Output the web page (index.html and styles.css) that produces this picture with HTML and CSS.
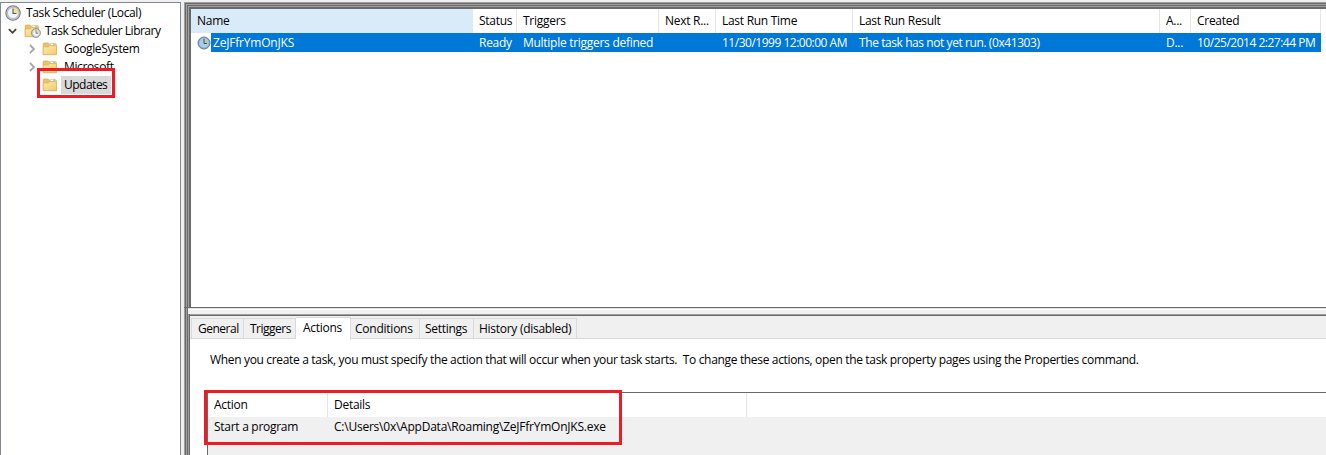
FILE: index.html
```
<!DOCTYPE html>
<html lang="en">
<head>
<meta charset="utf-8">
<title>Task Scheduler</title>
<link rel="stylesheet" href="styles.css">
</head>
<body>
<svg class="defs" width="0" height="0">
  <defs>
    <linearGradient id="gold" x1="0" y1="0" x2="1" y2="1"><stop offset="0" stop-color="#fdeaae"/><stop offset="1" stop-color="#efca6c"/></linearGradient>
    <symbol id="clock" viewBox="0 0 16 16">
      <circle cx="8" cy="8" r="7.2" fill="#c6c8ca" stroke="#7d8083" stroke-width="1.1"/>
      <circle cx="8" cy="8" r="5.5" fill="#eef4fa" stroke="#a2a6aa" stroke-width=".6"/>
      <path d="M8 8V2.7A5.3 5.3 0 0 1 13.3 8Z" fill="#f8dd9a"/>
      <path d="M8 3.5V8.5H11.5" fill="none" stroke="#4c5c70" stroke-width="1.1"/>
    </symbol>
    <symbol id="clock-selected" viewBox="0 0 14 14">
      <circle cx="7" cy="7" r="6" fill="#8eafc9" stroke="#5c7e9c"/>
      <circle cx="7" cy="7" r="4.6" fill="#a9cdea"/>
      <path d="M7 7V2.4A4.6 4.6 0 0 1 11.6 7Z" fill="#bdcba9"/>
      <path d="M7 3V7.5H10" fill="none" stroke="#2f536f"/>
    </symbol>
    <symbol id="folder" viewBox="0 0 16 14">
      <path d="M1.2 12.5V1.8Q1.2 1 2 1H6L7.2 2.2H14.2V12.5Z" fill="#e8c46c" stroke="#d4a94e" stroke-width=".7"/>
      <path d="M8.2 1.4H13.5V3.5H8.2Z" fill="#fff" stroke="#c8ae6b" stroke-width=".5"/>
      <path d="M11 1.7H13V2.6H11Z" fill="#5aa0d5"/>
      <path d="M1.2 4.9H6.4L7.6 3.6H14.5V12.7H1.2Z" fill="url(#gold)" stroke="#dcb254" stroke-width=".7"/>
    </symbol>
  </defs>
</svg>
<div class="app">
  <aside class="tree">
    <div class="node root"><svg class="clock"><use href="#clock"/></svg><span class="label">Task Scheduler (Local)</span></div>
    <div class="node library"><svg class="arrow open" viewBox="0 0 10 6"><path d="M1 1L5 5L9 1"/></svg><span class="libicon"><svg class="folder"><use href="#folder"/></svg><svg class="badge"><use href="#clock"/></svg></span><span class="label">Task Scheduler Library</span></div>
    <div class="node child"><svg class="arrow" viewBox="0 0 6 10"><path d="M1 1L5 5L1 9"/></svg><svg class="folder"><use href="#folder"/></svg><span class="label">GoogleSystem</span></div>
    <div class="node child"><svg class="arrow" viewBox="0 0 6 10"><path d="M1 1L5 5L1 9"/></svg><svg class="folder"><use href="#folder"/></svg><span class="label">Microsoft</span></div>
    <div class="node child selected"><span class="arrow"></span><svg class="folder"><use href="#folder"/></svg><span class="label">Updates</span></div>
    <div class="mark mark-tree"></div>
  </aside>
  <main class="content">
    <section class="tasks">
      <div class="row head"><span class="sorted">Name</span><span>Status</span><span>Triggers</span><span>Next R...</span><span>Last Run Time</span><span>Last Run Result</span><span>A...</span><span>Created</span></div>
      <div class="row task"><span class="name"><svg><use href="#clock-selected"/></svg><b>ZeJFfrYmOnJKS</b></span><span>Ready</span><span>Multiple triggers defined</span><span></span><span class="date">11/30/1999 12:00:00 AM</span><span class="result">The task has not yet run. (0x41303)</span><span>D...</span><span class="date">10/25/2014 2:27:44 PM</span></div>
    </section>
    <div class="splitter"></div>
    <section class="details">
      <nav class="tabs"><span class="t1">General</span><span class="t2">Triggers</span><span class="t3 active">Actions</span><span class="t4">Conditions</span><span class="t5">Settings</span><span class="t6">History (disabled)</span></nav>
      <p class="hint">When you create a task, you must specify the action that will occur when your task starts.&nbsp; To change these actions, open the task property pages using the Properties command.</p>
      <div class="actions">
        <div class="arow ahead"><span>Action</span><span>Details</span></div>
        <div class="arow"><span>Start a program</span><span class="path">C:\Users\0x\AppData\Roaming\ZeJFfrYmOnJKS.exe</span></div>
        <div class="mark mark-actions"></div>
      </div>
    </section>
  </main>
</div>
</body>
</html>
```
FILE: styles.css
```
* { box-sizing: border-box; }
body { margin: 0; width: 1326px; height: 455px; overflow: hidden; background: #f0f0f0; color: #000; font: 12px/18px "Open Sans", "Noto Sans", sans-serif; letter-spacing: -0.28px; white-space: nowrap; }
.defs { position: absolute; }
.app { display: flex; height: 455px; padding-top: 2px; }
.tree { position: relative; width: 181px; padding-top: 1px; background: #fff; border: solid #828790; border-width: 1px 1px 0; }
.node { display: flex; align-items: center; height: 18px; letter-spacing: -0.37px; }
.library { letter-spacing: -0.5px; }
.clock { width: 16px; height: 16px; margin: 0 5px 0 4px; }
.arrow { width: 6px; height: 10px; margin: 0 8px 0 28px; fill: none; stroke: #a6a6a6; stroke-width: 1.8; overflow: visible; }
.arrow.open { width: 9px; height: 6px; margin: 0 7px; stroke: #404040; stroke-width: 2; }
.folder { width: 16px; height: 14px; flex: none; }
.libicon { position: relative; display: flex; width: 16px; margin-right: 5px; }
.badge { position: absolute; left: 7px; top: 4px; width: 10px; height: 10px; }
.child .folder { margin: 0 3px 1px -1px; }
.child .label { padding: 0 3px; }
.selected { letter-spacing: -0.5px; }
.selected .label { width: 50px; background: #d9d9d9; }
.mark { position: absolute; border: 3px solid #ed1c24; }
.mark-tree { left: 36px; top: 65px; width: 78px; height: 30px; }
/* Nested pane frames are drawn as alternating light and dark lines */
.content { display: flex; flex-direction: column; width: 1142px; margin-left: 3px; padding-left: 4px; background: linear-gradient(90deg, #a0a0a0 1px, #696969 1px 2px, #a0a0a0 2px 3px, #696969 3px 4px, transparent 4px); }
.tasks { height: 306px; margin-left: -4px; padding: 7px 0 0 7px; border-bottom: 1px solid #696969; background:
  linear-gradient(#fff, #fff) 7px 7px no-repeat,
  linear-gradient(#696969, #696969) 5px 5px no-repeat,
  linear-gradient(#a0a0a0, #a0a0a0) 4px 4px no-repeat,
  linear-gradient(#696969, #696969) 3px 3px no-repeat,
  linear-gradient(#a0a0a0, #a0a0a0) 2px 2px no-repeat,
  linear-gradient(#696969, #696969) 1px 1px no-repeat, #a0a0a0; }
.row { display: grid; grid-template-columns: 282px 44px 142px 57px 137px 307px 31px 130px; width: 1130px; }
.head { height: 24px; line-height: 24px; }
.row > span { padding-left: 6px; border-right: 1px solid #e5e5e5; }
.row > .sorted { background: #d9ebf9; border-color: #d9ebf9; }
.task { height: 19px; line-height: 19px; color: #fff; background: linear-gradient(90deg, #fff 20px, #0078d7 20px); }
.row.task > span { border-color: transparent; }
.task .name { display: flex; align-items: center; letter-spacing: -0.2px; }
.task .date { letter-spacing: -0.49px; }
.task .result { letter-spacing: -0.42px; }
.task svg { width: 14px; height: 14px; margin-right: 2px; }
.task b { font-weight: 400; }
.splitter { height: 6px; background: linear-gradient(#e3e3e3 1px, #fff 1px 2px, #f0f0f0 2px); }
.details { flex: 1; display: flex; flex-direction: column; border-left: 1px solid #a0a0a0; background: linear-gradient(#a0a0a0 1px, #696969 1px 2px, #fff 2px); padding: 2px 0 0 1px; box-shadow: inset 1px 0 0 #696969; }
.tabs { display: flex; align-items: flex-end; height: 24px; padding-left: 1px; background: linear-gradient(#f0f0f0 22px, #d9d9d9 22px, #d9d9d9 23px, #fff 23px); letter-spacing: -0.42px; }
.tabs span { height: 21px; margin-bottom: 1px; border: 1px solid #d9d9d9; border-left-width: 0; padding-left: 6px; line-height: 20px; }
.tabs .t1 { width: 53px; border-left-width: 1px; letter-spacing: -0.5px; }
.tabs .t2 { width: 52px; letter-spacing: -0.5px; }
.tabs .t3 { width: 55px; height: 23px; background: #fff; border-bottom: 0; margin-bottom: 0; padding-left: 7px; letter-spacing: -0.28px; }
.tabs .t4 { width: 69px; padding-left: 4px; letter-spacing: -0.24px; }
.tabs .t5 { width: 54px; padding-left: 5px; letter-spacing: -0.28px; }
.tabs .t6 { width: 103px; padding-left: 5px; letter-spacing: -0.28px; }
.hint { margin: 11px 0 0 20px; height: 18px; letter-spacing: -0.332px; }
.actions { position: relative; flex: 1; margin: 23px 0 0 17px; border: solid #696969; border-width: 1px 0 0 1px; background: #f0f0f0; }
.arow { display: grid; grid-template-columns: 120px 419px; height: 20px; line-height: 20px; }
.arow span { padding-left: 6px; }
.ahead { height: 24px; line-height: 24px; background: #fff; }
.ahead span { border-right: 1px solid #e5e5e5; }
.arow .path { letter-spacing: -0.23px; }
.mark-actions { left: -4px; top: -3px; width: 418px; height: 55px; }
```
